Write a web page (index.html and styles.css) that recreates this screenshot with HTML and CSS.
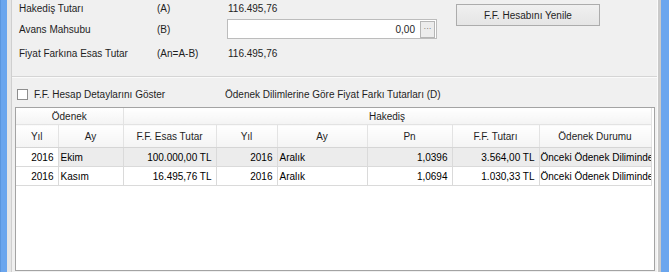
FILE: index.html
```html
<!DOCTYPE html>
<html>

<head>
    <title>Fiyat Farkı</title>
    <link rel="stylesheet" href="styles.css">
</head>

<body>
    <div id="frame">
        <div class="edge edge-left"></div>
        <div id="client">
            <div id="summary">
                <div class="lbl">Hakediş Tutarı</div>
                <div class="lbl">(A)</div>
                <div class="val">116.495,76</div>
                <div class="cmd">
                    <button class="button">F.F. Hesabını Yenile</button>
                </div>

                <div class="lbl">Avans Mahsubu</div>
                <div class="lbl">(B)</div>
                <div class="edit">
                    <span class="edit-text">0,00</span>
                    <span class="edit-btn">···</span>
                </div>

                <div class="lbl">Fiyat Farkına Esas Tutar</div>
                <div class="lbl">(An=A-B)</div>
                <div class="val">116.495,76</div>
            </div>

            <div class="sep"></div>

            <div id="options">
                <label class="check"><span class="box"></span>F.F. Hesap Detaylarını Göster</label>
                <span class="caption">Ödenek Dilimlerine Göre Fiyat Farkı Tutarları (D)</span>
            </div>

            <div id="grid">
                <table>
                    <colgroup>
                        <col style="width:42px">
                        <col style="width:65px">
                        <col style="width:93px">
                        <col style="width:61px">
                        <col style="width:90px">
                        <col style="width:85px">
                        <col style="width:87px">
                        <col style="width:112px">
                    </colgroup>
                    <thead>
                        <tr class="band">
                            <th colspan="2">Ödenek</th>
                            <th colspan="6">Hakediş</th>
                        </tr>
                        <tr class="cols">
                            <th>Yıl</th>
                            <th>Ay</th>
                            <th>F.F. Esas Tutar</th>
                            <th>Yıl</th>
                            <th>Ay</th>
                            <th>Pn</th>
                            <th>F.F. Tutarı</th>
                            <th>Ödenek Durumu</th>
                        </tr>
                    </thead>
                    <tbody>
                        <tr class="focused">
                            <td class="num first">2016</td>
                            <td>Ekim</td>
                            <td class="num">100.000,00 TL</td>
                            <td class="num">2016</td>
                            <td>Aralık</td>
                            <td class="num">1,0396</td>
                            <td class="num">3.564,00 TL</td>
                            <td class="clip">Önceki Ödenek Diliminde</td>
                        </tr>
                        <tr>
                            <td class="num">2016</td>
                            <td>Kasım</td>
                            <td class="num">16.495,76 TL</td>
                            <td class="num">2016</td>
                            <td>Aralık</td>
                            <td class="num">1,0694</td>
                            <td class="num">1.030,33 TL</td>
                            <td class="clip">Önceki Ödenek Diliminde</td>
                        </tr>
                    </tbody>
                </table>
            </div>
        </div>
        <div class="edge edge-right"></div>
    </div>
</body>

</html>
```

FILE: styles.css
```css
body {
    margin: 0;
    padding: 0;
    font-family: "Liberation Sans", Arial, sans-serif;
    font-size: 10px;
    color: #1e1e1e;
    background-color: #f0f0f0;
}

#frame {
    display: flex;
    height: 272px;
    overflow: hidden;
}

.edge {
    background-color: #6ba6ee;
}

.edge-left {
    width: 6px;
    border-left: 1px solid #5b96de;
    border-right: 4px solid #e6e6e6;
}

.edge-right {
    width: 8px;
    border-left: 3px solid #c9c9c9;
    box-shadow: -1px 0 0 #fafafa;
}

#client {
    flex: 1;
    border-left: 1px solid #cfcfcf;
    display: flex;
    flex-direction: column;
}

/* top form */

#summary {
    display: grid;
    grid-template-columns: 138px 70px 210px 163px;
    grid-template-rows: 17px 24px 24px;
    align-items: center;
    padding-left: 7px;
    padding-bottom: 11px;
}

.val {
    padding-left: 1px;
}

.cmd {
    grid-column: 4;
    grid-row: 1 / span 2;
    align-self: start;
    padding-left: 19px;
    padding-top: 4px;
}

.button {
    width: 144px;
    height: 22px;
    padding: 0;
    font-family: inherit;
    font-size: 10px;
    color: #1e1e1e;
    border: 1px solid #acacac;
    background: linear-gradient(#f0f0f0, #e5e5e5);
}

.edit {
    display: flex;
    align-items: center;
    height: 20px;
    box-sizing: border-box;
    border: 1px solid #bcbcbc;
    background-color: #fff;
}

.edit-text {
    flex: 1;
    text-align: right;
    padding-right: 5px;
}

.edit-btn {
    width: 13px;
    height: 15px;
    margin-right: 1px;
    border: 1px solid #b5b5b5;
    background-color: #ececec;
    color: #555;
    font-size: 8px;
    line-height: 13px;
    text-align: center;
}

.sep {
    height: 0;
    border-top: 1px solid #d5d5d5;
    border-bottom: 1px solid #fafafa;
}

/* options row */

#options {
    display: flex;
    align-items: center;
    height: 22px;
    margin-top: 5px;
    padding-left: 5px;
}

.check {
    display: flex;
    align-items: center;
    width: 208px;
}

.box {
    width: 9px;
    height: 9px;
    margin-right: 6px;
    border: 1px solid #8e8e8e;
    background-color: #fff;
}

/* grid */

#grid {
    flex: 1;
    margin: 2px 3px 1px 3px;
    border: 1px solid #a3a3a3;
    background-color: #fff;
}

table {
    table-layout: fixed;
    width: 635px;
    border-collapse: collapse;
}

th,
td {
    padding: 0;
    border-right: 1px solid #dadada;
    border-bottom: 1px solid #dadada;
    white-space: nowrap;
    overflow: hidden;
    font-weight: normal;
}

th {
    color: #1e1e1e;
    background: linear-gradient(#ffffff, #f4f4f4);
    text-align: center;
    border-color: #e3e3e3;
}

.band th {
    height: 16px;
}

.cols th {
    height: 22px;
    border-bottom-color: #d5d5d5;
}

td {
    height: 18px;
    padding-left: 2px;
    color: #000;
}

td.num {
    text-align: right;
    padding-left: 0;
    padding-right: 4px;
}

td.clip {
    padding-left: 1px;
    text-overflow: clip;
}

.focused td {
    background-color: #ececec;
}

.focused td.first {
    background-color: #fff;
}
```
